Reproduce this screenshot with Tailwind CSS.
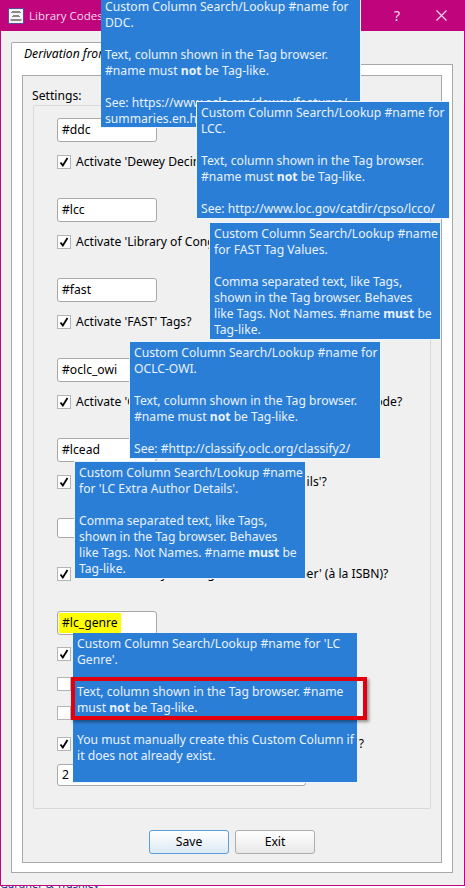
<!DOCTYPE html>
<html lang="en">
<head>
  <meta charset="UTF-8" />
  <title>Library Codes</title>
  <script src="https://cdn.jsdelivr.net/npm/@tailwindcss/browser@4"></script>
</head>
<body class="relative w-[465px] h-[888px] overflow-hidden bg-white font-['Noto_Sans',sans-serif] text-[12.15px] leading-[16px] text-black">

  <!-- bit of the window behind the dialog, only the bottoms of the letters show -->
  <p class="absolute left-0 top-[877px] text-[11px] leading-[14px] whitespace-nowrap text-[#1a1a9c]">Gardner &amp; Trashley</p>

  <!-- dialog window -->
  <div class="relative w-[465px] h-[886px] flex flex-col bg-[#f0f0f0] border-x border-b border-[#c0047c]">
    <div class="h-[31px] shrink-0 flex items-center bg-[#c0047c] pl-[7px]">
      <svg class="w-[16px] h-[16px] shrink-0" viewBox="0 0 16 16">
        <rect x="0.5" y="0.5" width="15" height="15" fill="#f4f4fa" stroke="#5a4aa0"/>
        <path d="M4 3.500h8M3 4.500h10M5 7.500h6M4 8.500h8M2.500 11.500h11M2.500 12.500h11" stroke="#8a8a8a"/>
      </svg>
      <span class="ml-[5px] font-['Open_Sans',sans-serif] text-[11.5px] text-[#f6d8ec]">Library Codes</span>
      <span class="ml-auto mr-[36px] text-[14px] text-[#f6d8ec]">?</span>
      <svg class="w-[11px] h-[11px] mr-[17px]" viewBox="0 0 11 11"><path d="M0.500 0.500l10 10M10.500 0.500l-10 10" stroke="#f6d8ec" stroke-width="1.200"/></svg>
    </div>

    <div class="mt-[11px] ml-[10px] w-[442px] flex flex-col">
      <div class="relative z-10 -mb-px h-[23px] w-[300px] flex items-center pl-[12px] bg-white border-x border-t border-[#a8a8a8] rounded-t-[2px] italic whitespace-nowrap">Derivation from Author/Title/ISBN</div>

      <div class="h-[809px] bg-white border border-[#a8a8a8] p-[10px]">
        <div class="h-[788px] bg-[#f0f0f0] border border-[#a8a8a8] px-[10px] pt-[12px]">
          <div class="h-[16px] -ml-px">Settings:</div>
          <div class="mt-px h-[704px] border border-[#d8d8d8] rounded-[2px] pl-[23px] pt-[12px]">

            <div class="h-[80px]">
              <div class="w-[100px] h-[24px] flex items-center px-[4px] bg-white border border-[#a8a8a8] rounded-[3px]">#ddc</div>
              <div class="mt-[12px] flex items-center gap-[5px] h-[16px]">
                <span class="w-[14px] h-[14px] flex items-center justify-center bg-white border border-[#b4b4b4]"><svg class="w-[10px] h-[10px]" viewBox="0 0 10 10"><path d="M1.500 5.500l2.300 3L8.500 1" fill="none" stroke="#000" stroke-width="1.800"/></svg></span>
                <span class="whitespace-nowrap">Activate 'Dewey Decimal Code' Tags?</span>
              </div>
            </div>

            <div class="h-[80px]">
              <div class="w-[100px] h-[24px] flex items-center px-[4px] bg-white border border-[#a8a8a8] rounded-[3px]">#lcc</div>
              <div class="mt-[12px] flex items-center gap-[5px] h-[16px]">
                <span class="w-[14px] h-[14px] flex items-center justify-center bg-white border border-[#b4b4b4]"><svg class="w-[10px] h-[10px]" viewBox="0 0 10 10"><path d="M1.500 5.500l2.300 3L8.500 1" fill="none" stroke="#000" stroke-width="1.800"/></svg></span>
                <span class="whitespace-nowrap">Activate 'Library of Congress Code' Tags?</span>
              </div>
            </div>

            <div class="h-[80px]">
              <div class="w-[100px] h-[24px] flex items-center px-[4px] bg-white border border-[#a8a8a8] rounded-[3px]">#fast</div>
              <div class="mt-[12px] flex items-center gap-[5px] h-[16px]">
                <span class="w-[14px] h-[14px] flex items-center justify-center bg-white border border-[#b4b4b4]"><svg class="w-[10px] h-[10px]" viewBox="0 0 10 10"><path d="M1.500 5.500l2.300 3L8.500 1" fill="none" stroke="#000" stroke-width="1.800"/></svg></span>
                <span class="whitespace-nowrap">Activate 'FAST' Tags?</span>
              </div>
            </div>

            <div class="h-[80px]">
              <div class="w-[100px] h-[24px] flex items-center px-[4px] bg-white border border-[#a8a8a8] rounded-[3px]">#oclc_owi</div>
              <div class="mt-[12px] flex items-center gap-[5px] h-[16px]">
                <span class="w-[14px] h-[14px] flex items-center justify-center bg-white border border-[#b4b4b4]"><svg class="w-[10px] h-[10px]" viewBox="0 0 10 10"><path d="M1.500 5.500l2.300 3L8.500 1" fill="none" stroke="#000" stroke-width="1.800"/></svg></span>
                <span class="whitespace-nowrap">Activate 'OCLC-OWI' Work Identifier Class Type Key Code?</span>
              </div>
            </div>

            <div class="h-[80px]">
              <div class="w-[100px] h-[24px] flex items-center px-[4px] bg-white border border-[#a8a8a8] rounded-[3px]">#lcead</div>
              <div class="mt-[12px] flex items-center gap-[5px] h-[16px]">
                <span class="w-[14px] h-[14px] flex items-center justify-center bg-white border border-[#b4b4b4]"><svg class="w-[10px] h-[10px]" viewBox="0 0 10 10"><path d="M1.500 5.500l2.300 3L8.500 1" fill="none" stroke="#000" stroke-width="1.800"/></svg></span>
                <span class="whitespace-nowrap">Activate 'LC Extra Author Full Name Details'?</span>
              </div>
            </div>

            <div class="h-[93px]">
              <div class="w-[100px] h-[20px] bg-white border border-[#a8a8a8] rounded-[3px]"></div>
              <div class="mt-[28px] flex items-center gap-[5px] h-[16px]">
                <span class="w-[14px] h-[14px] flex items-center justify-center bg-white border border-[#b4b4b4]"><svg class="w-[10px] h-[10px]" viewBox="0 0 10 10"><path d="M1.500 5.500l2.300 3L8.500 1" fill="none" stroke="#000" stroke-width="1.800"/></svg></span>
                <span class="whitespace-nowrap">Activate 'Library of Congress Card Number' (à la ISBN)?</span>
              </div>
            </div>

            <div class="w-[100px] h-[24px] flex items-center px-[1px] bg-white border border-[#a8a8a8] rounded-[3px]">
              <span class="h-[20px] flex items-center px-[3px] bg-[#ffff00]">#lc_genre</span>
            </div>
            <div class="mt-[11px] flex items-center gap-[5px] h-[16px]">
              <span class="w-[14px] h-[14px] flex items-center justify-center bg-white border border-[#b4b4b4]"><svg class="w-[10px] h-[10px]" viewBox="0 0 10 10"><path d="M1.500 5.500l2.300 3L8.500 1" fill="none" stroke="#000" stroke-width="1.800"/></svg></span>
              <span class="whitespace-nowrap">Activate 'LC Genre'</span>
            </div>
            <div class="mt-[14px] flex items-center h-[16px]"><span class="w-[14px] h-[14px] bg-white border border-[#b4b4b4]"></span></div>
            <div class="mt-[13px] flex items-center h-[16px]"><span class="w-[14px] h-[14px] bg-white border border-[#b4b4b4]"></span></div>
            <div class="mt-[15px] flex items-center gap-[5px] h-[16px]">
              <span class="w-[14px] h-[14px] flex items-center justify-center bg-white border border-[#b4b4b4]"><svg class="w-[10px] h-[10px]" viewBox="0 0 10 10"><path d="M1.500 5.500l2.300 3L8.500 1" fill="none" stroke="#000" stroke-width="1.800"/></svg></span>
              <span class="w-[288px] text-right whitespace-nowrap">?</span>
            </div>
            <div class="mt-[12px] w-[249px] h-[22px] flex items-center px-[4px] bg-white border border-[#a8a8a8] rounded-[3px]">2</div>
          </div>

          <div class="mt-[21px] flex justify-center gap-[6px]">
            <button class="w-[80px] h-[24px] rounded-[3px] border border-[#5c9fd8] bg-gradient-to-b from-white to-[#dde9f3]">Save</button>
            <button class="w-[80px] h-[24px] rounded-[3px] border border-[#adadad] bg-gradient-to-b from-white to-[#e8e8e8]">Exit</button>
          </div>
        </div>
      </div>
    </div>
  </div>

  <!-- tooltips lie over the form -->
  <div class="absolute z-20 left-[101px] top-[-5px] w-[260px] h-[133px] pl-[4px] pt-[4px] bg-[#2b7ed6] border-r border-b border-[#e8f4ff] text-[#e8f2fc] whitespace-nowrap">
    Custom Column Search/Lookup #name for<br>DDC.<br><br>Text, column shown in the Tag browser.<br>#name must <b>not</b> be Tag-like.<br><br>See: https://www.oclc.org/dewey/features/<br>summaries.en.html
  </div>
  <div class="absolute z-20 left-[196px] top-[101px] w-[254px] h-[118px] pl-[4px] pt-[3px] bg-[#2b7ed6] border border-[#e8f4ff] text-[#e8f2fc] whitespace-nowrap">
    Custom Column Search/Lookup #name for<br>LCC.<br><br>Text, column shown in the Tag browser.<br>#name must <b>not</b> be Tag-like.<br><br>See: http://www.loc.gov/catdir/cpso/lcco/
  </div>
  <div class="absolute z-20 left-[209px] top-[222px] w-[232px] h-[118px] pl-[4px] pt-[3px] bg-[#2b7ed6] border border-[#e8f4ff] text-[#e8f2fc] whitespace-nowrap">
    Custom Column Search/Lookup #name<br>for FAST Tag Values.<br><br>Comma separated text, like Tags,<br>shown in the Tag browser. Behaves<br>like Tags. Not Names. #name <b>must</b> be<br>Tag-like.
  </div>
  <div class="absolute z-20 left-[129px] top-[341px] w-[252px] h-[118px] pl-[4px] pt-[3px] bg-[#2b7ed6] border border-[#e8f4ff] text-[#e8f2fc] whitespace-nowrap">
    Custom Column Search/Lookup #name for<br>OCLC-OWI.<br><br>Text, column shown in the Tag browser.<br>#name must <b>not</b> be Tag-like.<br><br>See: #http://classify.oclc.org/classify2/
  </div>
  <div class="absolute z-20 left-[74px] top-[461px] w-[232px] h-[118px] pl-[4px] pt-[3px] bg-[#2b7ed6] border border-[#e8f4ff] text-[#e8f2fc] whitespace-nowrap">
    Custom Column Search/Lookup #name<br>for 'LC Extra Author Details'.<br><br>Comma separated text, like Tags,<br>shown in the Tag browser. Behaves<br>like Tags. Not Names. #name <b>must</b> be<br>Tag-like.
  </div>
  <div class="absolute z-20 left-[73px] top-[633px] w-[285px] h-[150px] pl-[4px] pt-[3px] bg-[#2b7ed6] border-r border-b border-[#e8f4ff] text-[#e8f2fc] whitespace-nowrap">
    Custom Column Search/Lookup #name for 'LC<br>Genre'.<br><br>Text, column shown in the Tag browser. #name<br>must <b>not</b> be Tag-like.<br><br>You must manually create this Custom Column if<br>it does not already exist.
  </div>

  <!-- red annotation box -->
  <div class="absolute z-30 left-[71px] top-[677px] w-[296px] h-[43px] border-[4px] border-[#e2000f] shadow-[2px_2px_3px_rgba(0,0,0,0.4)]"></div>
</body>
</html>
